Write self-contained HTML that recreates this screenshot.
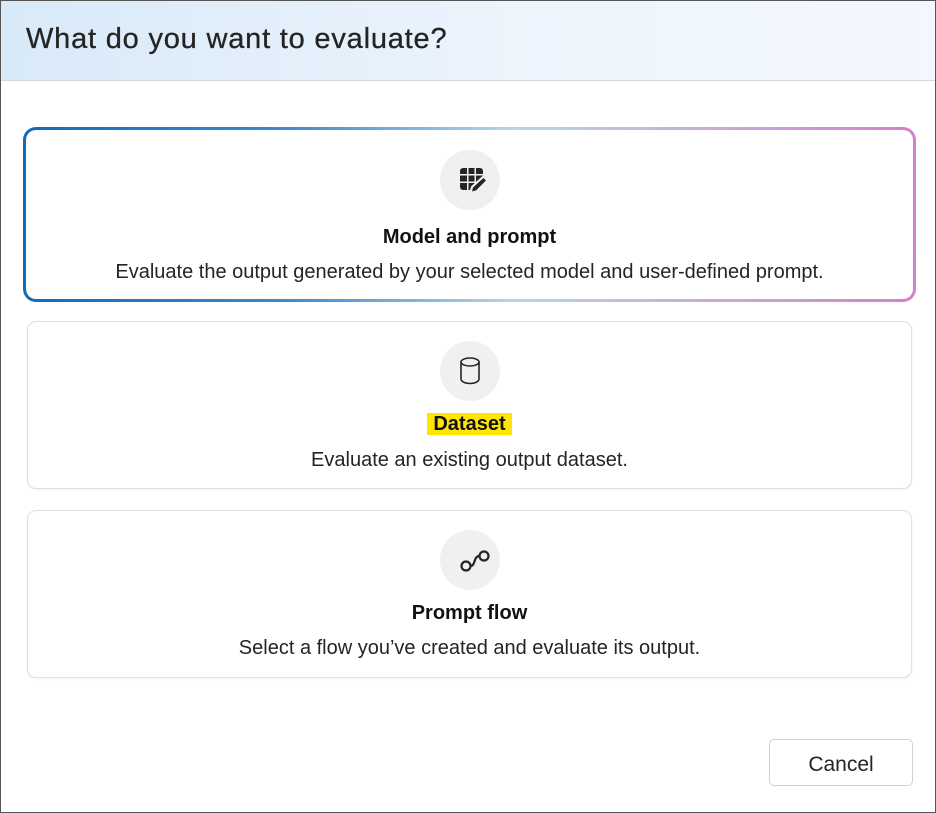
<!DOCTYPE html>
<html><head><style>
*{box-sizing:border-box;margin:0;padding:0}
body{width:936px;height:813px;background:#fff;font-family:"Liberation Sans",sans-serif;color:#242424;position:relative;overflow:hidden}
.frame{position:absolute;left:0;top:0;width:936px;height:813px;border:1px solid #555}
.hdr{position:absolute;left:1px;top:1px;width:934px;height:80px;background:linear-gradient(90deg,#d8e9f8,#eef5fd 60%,#f3f7fe);border-bottom:1px solid #d6d6d6}
.hdr h1{position:absolute;left:25px;top:22px;font-size:29px;font-weight:normal;letter-spacing:0.8px;-webkit-text-stroke:0.3px #242424}
.card{position:absolute;text-align:center;background:#fff;border:1px solid #e0e0e0;border-radius:9px;box-shadow:0 1px 2px rgba(0,0,0,.06)}
.g{left:23px;top:127px;width:893px;height:175px;border:3px solid transparent;border-radius:13px;background:linear-gradient(#fff,#fff) padding-box,linear-gradient(90deg,#0f6cbd,#3d8bd0 30%,#b7d5ea 55%,#c9a6d8 80%,#d57fce) border-box;box-shadow:none}
.ic{position:absolute;left:50%;margin-left:-30px;width:60px;height:60px;border-radius:50%;background:#f0f0f0}
.ic svg{position:absolute;left:0;top:0}
.t{position:absolute;left:0;right:0;font-size:20px;font-weight:bold;color:#111;line-height:24px}
.d{position:absolute;left:0;right:0;font-size:20px;line-height:24px}
.hl{background:#ffe600;padding:0 6px}
.btn{position:absolute;left:769px;top:739px;width:144px;height:47px;border:1px solid #d1d1d1;border-radius:5px;font-size:21px;display:flex;align-items:center;justify-content:center;padding-top:4px}
</style></head><body>
<div class="frame"></div>
<div class="hdr"><h1>What do you want to evaluate?</h1></div>

<div class="card g">
  <div class="ic" style="top:20px"><svg width="60" height="60" viewBox="0 0 60 60"><g fill="#242424"><path d="M20 21a3 3 0 0 1 3-3h4v6h-7z"/><rect x="28.5" y="18" width="6" height="6"/><path d="M36 18h4a3 3 0 0 1 3 3v3h-7z"/><rect x="20" y="25.5" width="7" height="6"/><rect x="28.5" y="25.5" width="6" height="6"/><rect x="36" y="25.5" width="7" height="6"/><path d="M20 33h7v7h-4a3 3 0 0 1-3-3z"/><rect x="28.5" y="33" width="6" height="7"/></g><path d="M43.5 26.5l4 4-11 11-6 1.5 1.5-6z" fill="#242424" stroke="#f0f0f0" stroke-width="2.2" stroke-linejoin="round"/></svg></div>
  <div class="t" style="top:95px">Model and prompt</div>
  <div class="d" style="top:130px">Evaluate the output generated by your selected model and user-defined prompt.</div>
</div>

<div class="card" style="left:27px;top:321px;width:885px;height:168px">
  <div class="ic" style="top:19px"><svg width="60" height="60" viewBox="0 0 60 60"><ellipse cx="30" cy="21" rx="9" ry="4" fill="none" stroke="#242424" stroke-width="1.6"/><path d="M21 21v17c0 2.5 4 4.5 9 4.5s9-2 9-4.5V21" fill="none" stroke="#242424" stroke-width="1.6"/></svg></div>
  <div class="t" style="top:90px"><span class="hl">Dataset</span></div>
  <div class="d" style="top:126px">Evaluate an existing output dataset.</div>
</div>

<div class="card" style="left:27px;top:510px;width:885px;height:168px">
  <div class="ic" style="top:19px"><svg width="60" height="60" viewBox="0 0 60 60"><circle cx="26" cy="36" r="4.5" fill="none" stroke="#242424" stroke-width="2.2"/><circle cx="44" cy="26" r="4.5" fill="none" stroke="#242424" stroke-width="2.2"/><path d="M30.5 36c5 0 3-10 9-10" fill="none" stroke="#242424" stroke-width="2.2"/></svg></div>
  <div class="t" style="top:90px">Prompt flow</div>
  <div class="d" style="top:125px">Select a flow you’ve created and evaluate its output.</div>
</div>

<div class="btn">Cancel</div>
</body></html>
